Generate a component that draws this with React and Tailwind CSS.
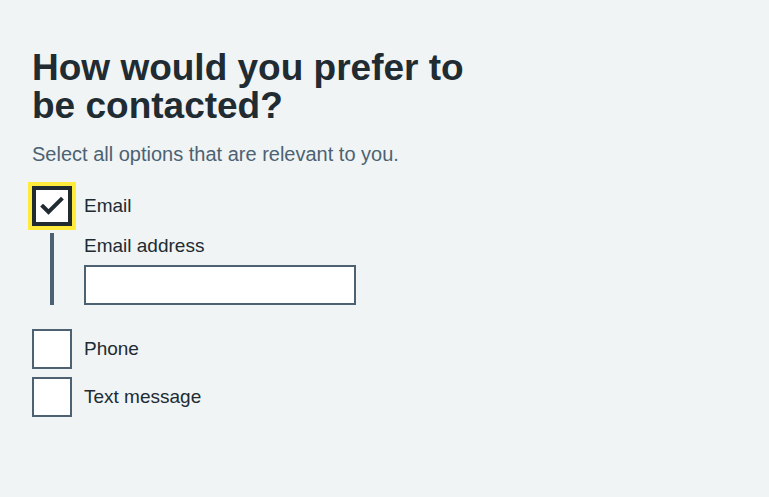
import React from 'react';

function Box({ checked }) {
    return (
        <span
            className={`flex w-10 h-10 shrink-0 items-center justify-center bg-white ${checked
                ? 'border-4 border-[#212b32] shadow-[0_0_0_4px_#ffeb3b]'
                : 'border-2 border-[#4c6272]'
                }`}
        >
            {checked && (
                <svg width="24" height="20" viewBox="0 0 24 20" fill="none">
                    <path d="M3 10.5l5.5 5.5L21 3.5" stroke="#212b32" strokeWidth="4" strokeLinecap="square" />
                </svg>
            )}
        </span>
    );
}

function Item({ label, checked }) {
    return (
        <label className="flex items-center gap-3">
            <Box checked={checked} />
            <span className="text-[19px] leading-6">{label}</span>
        </label>
    );
}

export default function App() {
    return (
        <div className="min-h-screen bg-[#f0f4f5] text-[#212b32] font-['Liberation_Sans',Arial,sans-serif]">
            <div className="px-8 pt-[49px]">
                <h1 className="max-w-[460px] text-[37px] leading-[38px] font-bold">How would you prefer to be contacted?</h1>
                <p className="mt-[17px] text-[20px] leading-6 text-[#4c6272]">Select all options that are relevant to you.</p>

                {/* Checkboxes */}
                <div className="mt-[20px]">
                    <Item label="Email" checked />
                    <div className="ml-[18px] mt-[7px] border-l-4 border-[#4c6272] pl-[30px]">
                        <div className="text-[19px] leading-6 pt-[1px]">Email address</div>
                        <input className="mt-[7px] block h-10 w-[272px] border-2 border-[#4c6272] bg-white" />
                    </div>
                    <div className="mt-[24px] flex flex-col gap-2">
                        <Item label="Phone" />
                        <Item label="Text message" />
                    </div>
                </div>
            </div>
        </div>
    );
}
